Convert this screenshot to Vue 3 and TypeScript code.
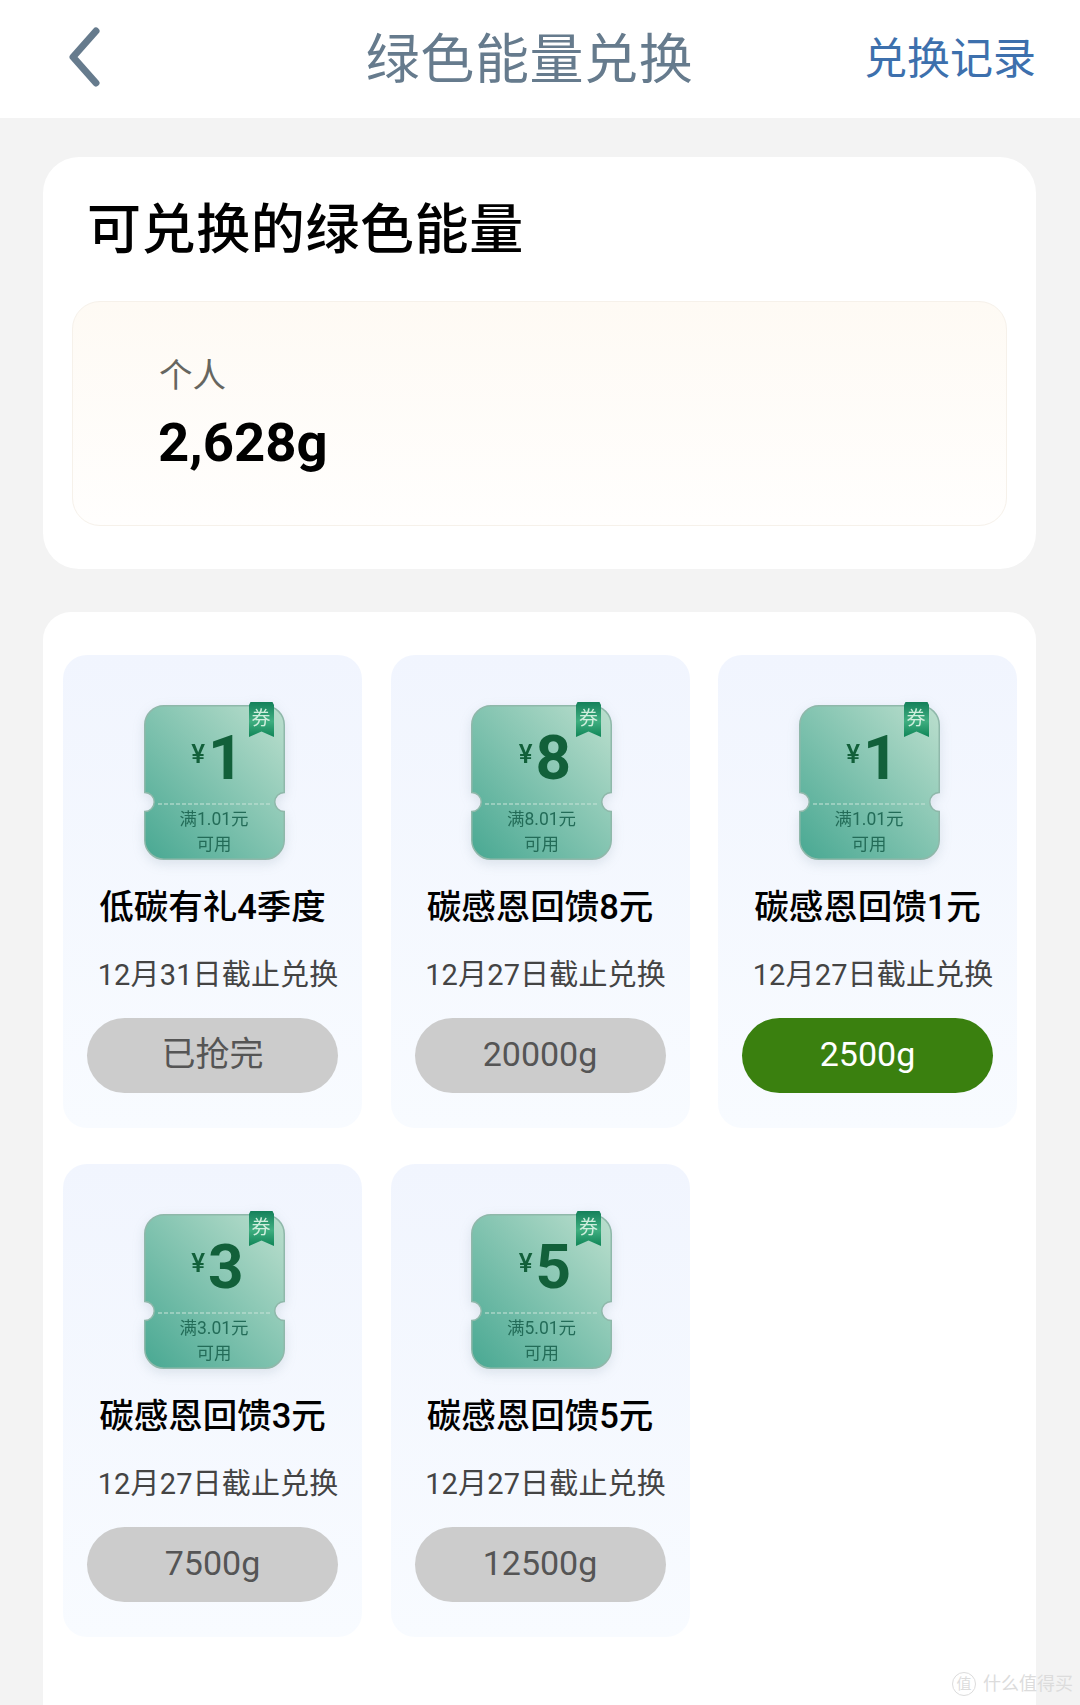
<script setup lang="ts">
interface Item {
  name: string
  date: string
  amount: string
  min: string
  price: string
  active?: boolean
}
const items: Item[] = [
  { name: '低碳有礼4季度', date: '12月31日截止兑换', amount: '1', min: '满1.01元', price: '已抢完' },
  { name: '碳感恩回馈8元', date: '12月27日截止兑换', amount: '8', min: '满8.01元', price: '20000g' },
  { name: '碳感恩回馈1元', date: '12月27日截止兑换', amount: '1', min: '满1.01元', price: '2500g', active: true },
  { name: '碳感恩回馈3元', date: '12月27日截止兑换', amount: '3', min: '满3.01元', price: '7500g' },
  { name: '碳感恩回馈5元', date: '12月27日截止兑换', amount: '5', min: '满5.01元', price: '12500g' },
]
const ticketPath =
  'M20 .75H121A19.25 19.25 0 0 1 140.25 20V87.5A9.5 9.5 0 0 0 140.25 106.500V135A19.25 19.25 0 0 1 121 154.25H20A19.25 19.25 0 0 1 .75 135V106.500A9.5 9.5 0 0 0 .75 87.5V20A19.25 19.25 0 0 1 20 .75Z'
</script>

<template>
  <div class="page">
    <header class="nav">
      <svg class="back" width="36" height="60" viewBox="0 0 36 60" fill="none">
        <path d="M29 4 6 30l23 26" stroke="#667b8d" stroke-width="7" stroke-linecap="round" stroke-linejoin="round" />
      </svg>
      <h1 class="nav-title">绿色能量兑换</h1>
      <a class="nav-link">兑换记录</a>
    </header>

    <section class="balance-card">
      <h2 class="balance-title">可兑换的绿色能量</h2>
      <div class="balance-box">
        <div class="balance-label">个人</div>
        <div class="balance-value">2,628g</div>
      </div>
    </section>

    <section class="goods-card">
      <article v-for="(item, i) in items" :key="i" class="good">
        <div class="ticket">
          <svg class="ticket-bg" width="141" height="155" viewBox="0 0 141 155">
            <defs>
              <linearGradient :id="'tg' + i" x1="0" y1="1" x2="1" y2="0">
                <stop offset="0" stop-color="#48a892" />
                <stop offset="1" stop-color="#bcdfce" />
              </linearGradient>
            </defs>
            <path :d="ticketPath" :fill="'url(#tg' + i + ')'" stroke="#8fb8aa" stroke-width="1.5" />
            <path d="M14 99H127" stroke="#c5e2d6" stroke-opacity=".7" stroke-width="1.4" stroke-dasharray="4 2" />
          </svg>
          <svg class="ribbon" width="25" height="36" viewBox="0 0 25 36">
            <defs>
              <linearGradient :id="'rg' + i" x1="0" y1="0" x2="0" y2="1">
                <stop offset="0" stop-color="#14805a" />
                <stop offset=".55" stop-color="#3fae80" />
                <stop offset="1" stop-color="#0f8557" />
              </linearGradient>
            </defs>
            <path d="M1.5 0H23.500L25 3V35L12.500 29.500 0 35V3Z" :fill="'url(#rg' + i + ')'" />
          </svg>
          <span class="ribbon-text">券</span>
          <div class="amount"><span class="yen">¥</span><span class="num">{{ item.amount }}</span></div>
          <div class="cond">{{ item.min }}</div>
          <div class="cond">可用</div>
        </div>
        <div class="good-name">{{ item.name }}</div>
        <div class="good-date">{{ item.date }}</div>
        <button class="good-btn" :class="{ active: item.active }">{{ item.price }}</button>
      </article>
    </section>

    <div class="watermark">
      <span class="wm-circle">值</span>
      <span>什么值得买</span>
    </div>
  </div>
</template>

<style>
html,
body {
  margin: 0;
  background: #f3f3f3;
}
</style>

<style scoped>
.page {
  position: relative;
  width: 1080px;
  height: 1705px;
  overflow: hidden;
  background: #f3f3f3;
  font-family: Roboto, "Noto Sans CJK SC", sans-serif;
}
.nav {
  position: relative;
  height: 118px;
  background: #fff;
  display: flex;
  align-items: center;
  justify-content: center;
}
.back {
  position: absolute;
  left: 67px;
  top: 27px;
}
.nav-title {
  margin: 3px 21px 0 0;
  font-size: 54px;
  line-height: 64px;
  font-weight: 400;
  color: #667b8d;
  letter-spacing: .6px;
}
.nav-link {
  position: absolute;
  right: 44px;
  top: 32px;
  font-size: 43px;
  line-height: 54px;
  color: #3d70ad;
}
.balance-card {
  margin: 39px 44px 0 43px;
  height: 412px;
  background: #fff;
  border-radius: 36px;
  padding: 39px 29px 0;
  box-sizing: border-box;
}
.balance-title {
  margin: 0 0 0 15px;
  font-size: 54px;
  line-height: 70px;
  font-weight: 500;
  color: #000;
  letter-spacing: .6px;
}
.balance-box {
  margin-top: 35px;
  height: 225px;
  box-sizing: border-box;
  border: 1px solid #f6f1ea;
  border-radius: 28px;
  background: linear-gradient(#fefaf4, #fffefd);
  padding: 52px 0 0 86px;
}
.balance-label {
  font-size: 33.500px;
  line-height: 44px;
  color: #666660;
}
.balance-value {
  margin: 12px 0 0 -1px;
  font-size: 54.500px;
  line-height: 64px;
  font-weight: 700;
  color: #000;
}
.goods-card {
  margin: 43px 44px 0 43px;
  height: 1200px;
  box-sizing: border-box;
  background: #fff;
  border-radius: 28px;
  padding: 43px 19px 0 20px;
  display: grid;
  grid-template-columns: repeat(3, 299px);
  grid-auto-rows: 473px;
  column-gap: 28.500px;
  row-gap: 36px;
  align-content: start;
}
.good {
  border-radius: 24px;
  background: linear-gradient(#f1f5fe, #f8fbff);
  display: flex;
  flex-direction: column;
  align-items: center;
  padding-top: 50px;
  box-sizing: border-box;
}
.ticket {
  position: relative;
  width: 141px;
  height: 155px;
  flex: none;
  margin-left: 3px;
  display: flex;
  flex-direction: column;
  align-items: center;
  filter: drop-shadow(0 4px 6px rgba(90, 120, 130, .16));
}
.ticket-bg {
  position: absolute;
  left: 0;
  top: 0;
}
.ribbon {
  position: absolute;
  left: 105px;
  top: -3px;
}
.ribbon-text {
  position: absolute;
  left: 105px;
  top: 2px;
  width: 25px;
  text-align: center;
  font-size: 19px;
  line-height: 24px;
  color: #cfeedd;
}
.amount {
  position: relative;
  height: 87px;
  margin: 15px 0 0 7px;
  display: flex;
  align-items: baseline;
  color: #12603a;
  font-weight: 700;
  line-height: 76px;
}
.yen {
  font-size: 26px;
  font-weight: 500;
  margin-right: 3px;
  position: relative;
  top: -16px;
}
.num {
  font-size: 62px;
}
.cond {
  position: relative;
  font-size: 17.500px;
  line-height: 25px;
  color: #236c58;
}
.good-name {
  margin-top: 24px;
  font-size: 34.500px;
  line-height: 46px;
  font-weight: 500;
  color: #000;
  white-space: nowrap;
}
.good-date {
  margin: 25px 0 0 11px;
  font-size: 29px;
  line-height: 40px;
  color: #444;
  white-space: nowrap;
  letter-spacing: .15px;
}
.good-btn {
  margin-top: 23px;
  width: 251px;
  height: 75px;
  flex: none;
  border: none;
  padding: 0 0 4px;
  border-radius: 38px;
  background: #ccc;
  color: #555;
  font-family: inherit;
  font-size: 34px;
  line-height: 44px;
}
.good-btn.active {
  background: #3a800f;
  color: #fff;
}
.watermark {
  position: absolute;
  left: 952px;
  top: 1672px;
  display: flex;
  align-items: center;
  gap: 7px;
  font-size: 18px;
  line-height: 24px;
  color: #dcdcdc;
  white-space: nowrap;
}
.wm-circle {
  width: 22px;
  height: 22px;
  border: 1px solid #dcdcdc;
  border-radius: 50%;
  font-size: 15px;
  line-height: 22px;
  text-align: center;
}
</style>
